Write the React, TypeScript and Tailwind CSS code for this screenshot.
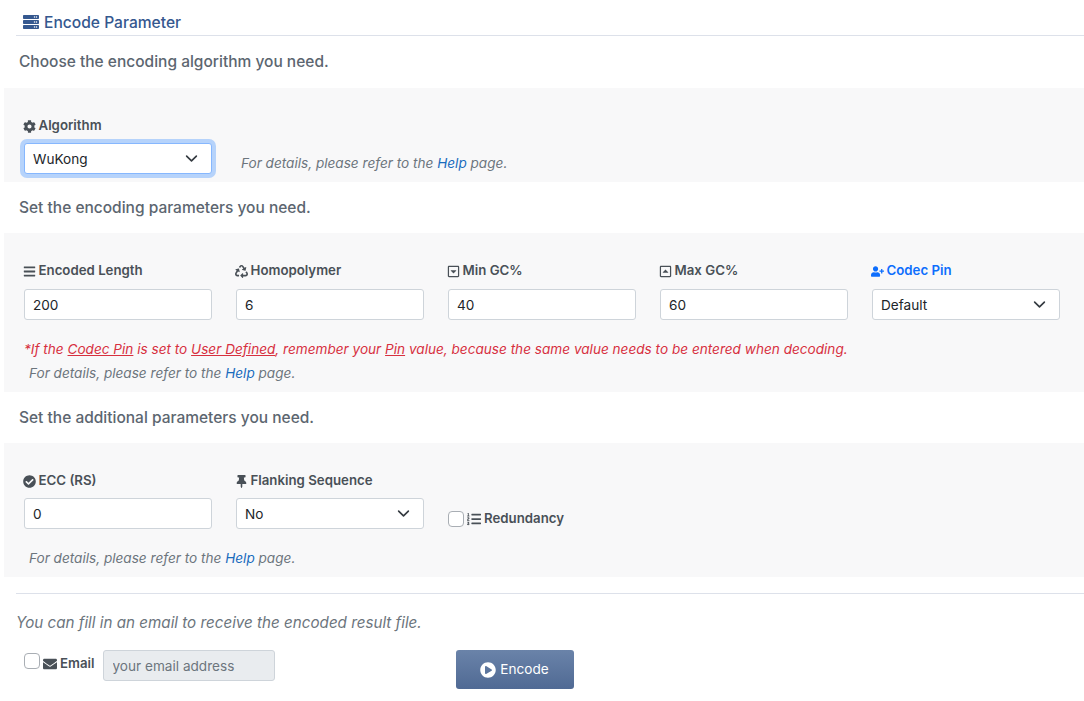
import { ReactNode } from "react";
import {
  FaBars,
  FaCheckCircle,
  FaCog,
  FaEnvelope,
  FaListOl,
  FaPlayCircle,
  FaRecycle,
  FaRegCaretSquareDown,
  FaRegCaretSquareUp,
  FaServer,
  FaThumbtack,
  FaUserPlus,
} from "react-icons/fa";

function Label({ icon, text, blue }: { icon: ReactNode; text: string; blue?: boolean }) {
  return (
    <div className={`flex items-center gap-[2.5px] h-[21px] pt-px -ml-px text-[13.25px] font-semibold ${blue ? "text-[#0d6efd]" : "text-[#495057]"}`}>
      <span className="text-[13px] shrink-0">{icon}</span>
      <span>{text}</span>
    </div>
  );
}

function TextBox({ value, className = "mt-[8px]" }: { value: string; className?: string }) {
  return (
    <input
      readOnly
      value={value}
      className={`w-[188px] h-[31px] px-2 bg-white border border-[#ced4da] rounded-[3px] text-[13.6px] text-[#212529] outline-none ${className}`}
    />
  );
}

function Select({ value, focused, className = "mt-[8px]" }: { value: string; focused?: boolean; className?: string }) {
  return (
    <div
      className={`relative w-[188px] h-[31px] flex items-center px-2 pt-px bg-white border rounded-[3px] text-[13.6px] text-[#212529] ${className} ${
        focused ? "border-[#86b7fe] shadow-[0_0_0_4px_#b6d3fb]" : "border-[#ced4da]"
      }`}
    >
      {value}
      <svg viewBox="0 0 16 16" className="absolute right-[13px] top-[8px] w-[13px] h-[13px]" fill="none" stroke="#343a40" strokeWidth="2" strokeLinecap="round" strokeLinejoin="round">
        <path d="M2 5l6 6 6-6" />
      </svg>
    </div>
  );
}

function Field({ label, children }: { label: ReactNode; children: ReactNode }) {
  return (
    <div className="flex flex-col w-[188px]">
      {label}
      {children}
    </div>
  );
}

function HelpLine({ className }: { className: string }) {
  return (
    <p className={`text-[13.6px] italic text-[#6c757d] ${className}`}>
      For details, please refer to the <span className="text-[#1a6bbd]">Help</span> page.
    </p>
  );
}

function SectionTitle({ children, className }: { children: ReactNode; className: string }) {
  return <p className={`pl-[15px] text-[15.5px] font-medium leading-[20px] text-[#5c6670] ${className}`}>{children}</p>;
}

export default function App() {
  return (
    <div className="w-[1084px] h-[701px] overflow-hidden bg-white pl-[4px] font-['Inter','Liberation_Sans',sans-serif]">
      {/* Header */}
      <div className="ml-[12px] h-[36px] border-b border-[#dde1ea] flex items-start pt-[13px] pl-[7px] text-[#35588f]">
        <FaServer className="text-[16px] mt-[1px] shrink-0" />
        <span className="ml-[5px] text-[15.6px] font-medium leading-[20px]">Encode Parameter</span>
      </div>

      <SectionTitle className="mt-[16px]">Choose the encoding algorithm you need.</SectionTitle>

      {/* Algorithm */}
      <div className="mt-[16px] h-[94px] bg-[#f8f8f9] pl-[20px] pt-[27px] flex">
        <Field label={<Label icon={<FaCog />} text="Algorithm" />}>
          <Select value="WuKong" focused className="mt-[7px]" />
        </Field>
        <HelpLine className="ml-[29px] mt-[38px] leading-[20px]" />
      </div>

      <SectionTitle className="mt-[16px]">Set the encoding parameters you need.</SectionTitle>

      {/* Encoding parameters */}
      <div className="mt-[15px] h-[159px] bg-[#f8f8f9] pl-[20px] pt-[27px]">
        <div className="flex gap-[24px]">
          <Field label={<Label icon={<FaBars />} text="Encoded Length" />}>
            <TextBox value="200" />
          </Field>
          <Field label={<Label icon={<FaRecycle />} text="Homopolymer" />}>
            <TextBox value="6" />
          </Field>
          <Field label={<Label icon={<FaRegCaretSquareDown />} text="Min GC%" />}>
            <TextBox value="40" />
          </Field>
          <Field label={<Label icon={<FaRegCaretSquareUp />} text="Max GC%" />}>
            <TextBox value="60" />
          </Field>
          <Field label={<Label blue icon={<FaUserPlus />} text="Codec Pin" />}>
            <Select value="Default" />
          </Field>
        </div>
        <p className="mt-[19px] text-[13.6px] leading-[20px] italic text-[#d7303f]">
          *If the <u>Codec Pin</u> is set to <u>User Defined</u>, remember your <u>Pin</u> value, because the same value needs to be entered when decoding.
        </p>
        <HelpLine className="ml-[5px] mt-[4px] leading-[20px]" />
      </div>

      <SectionTitle className="mt-[16px]">Set the additional parameters you need.</SectionTitle>

      {/* Additional parameters */}
      <div className="mt-[15px] h-[134px] bg-[#f8f8f9] pl-[20px] pt-[27px]">
        <div className="flex gap-[24px]">
          <Field label={<Label icon={<FaCheckCircle />} text="ECC (RS)" />}>
            <TextBox value="0" className="mt-[7px]" />
          </Field>
          <Field label={<Label icon={<FaThumbtack />} text="Flanking Sequence" />}>
            <Select value="No" className="mt-[7px]" />
          </Field>
          <div className="flex items-center mt-[39px] h-[20px]">
            <span className="w-[16px] h-[16px] bg-white border border-[#a9aeb4] rounded-[4px]" />
            <span className="ml-[3px] flex items-center gap-[3px] text-[13.25px] font-semibold text-[#495057]">
              <FaListOl className="text-[14px]" />
              Redundancy
            </span>
          </div>
        </div>
        <HelpLine className="ml-[5px] mt-[19px] leading-[20px]" />
      </div>

      {/* Email */}
      <div className="ml-[12px] mt-[16px] border-t border-[#dde1ea] pt-[19px]">
        <p className="text-[15.2px] leading-[20px] italic text-[#6c757d]">You can fill in an email to receive the encoded result file.</p>
        <div className="flex items-start mt-[16px] pl-[8px]">
          <span className="w-[16px] h-[16px] mt-[4px] bg-white border border-[#a9aeb4] rounded-[4px]" />
          <span className="ml-[3px] mt-[5px] flex items-center gap-[3px] h-[20px] text-[13.25px] font-semibold text-[#495057]">
            <FaEnvelope className="text-[14px]" />
            Email
          </span>
          <input
            readOnly
            placeholder="your email address"
            className="ml-[8px] mt-[1px] w-[172px] h-[31px] px-[9px] bg-[#e9ecef] border border-[#ced4da] rounded-[3px] text-[13.6px] placeholder:text-[#6c757d] outline-none"
          />
          <button className="ml-[181px] mt-[1px] w-[118px] h-[39px] flex items-center justify-center gap-[4px] rounded-[3px] bg-gradient-to-b from-[#6a83a9] to-[#506a94] text-white text-[13.6px]">
            <FaPlayCircle className="text-[16px]" />
            Encode
          </button>
        </div>
      </div>
    </div>
  );
}
